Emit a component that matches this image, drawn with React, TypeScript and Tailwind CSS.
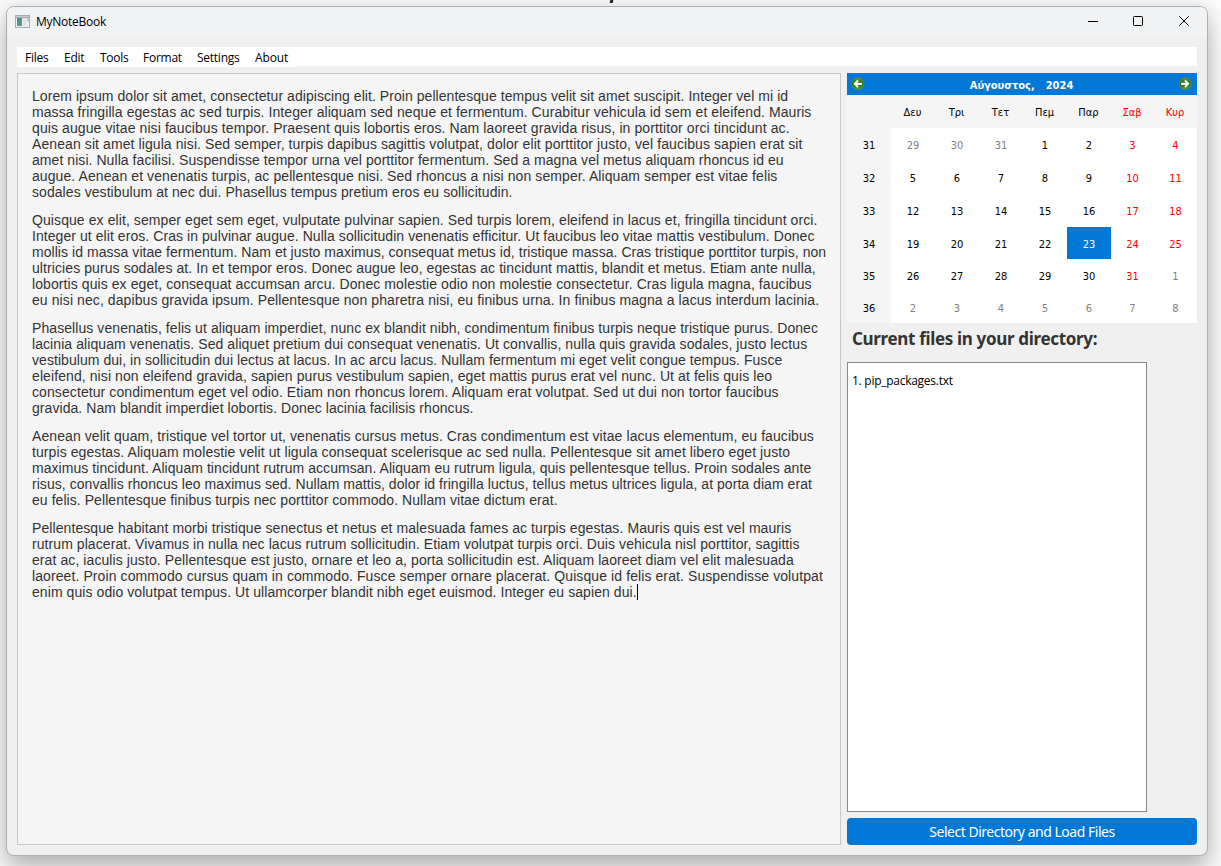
import React from "react";

type Line = [text: string, stretch: number];

// Each line carries the extra width, in pixels, that is spread over its letters.
const paragraphs: Line[][] = [
  [
    ["Lorem ipsum dolor sit amet, consectetur adipiscing elit. Proin pellentesque tempus velit sit amet suscipit. Integer vel mi id", 6.8],
    ["massa fringilla egestas ac sed turpis. Integer aliquam sed neque et fermentum. Curabitur vehicula id sem et eleifend. Mauris", 9.8],
    ["quis augue vitae nisi faucibus tempor. Praesent quis lobortis eros. Nam laoreet gravida risus, in porttitor orci tincidunt ac.", 12.2],
    ["Aenean sit amet ligula nisi. Sed semper, turpis dapibus sagittis volutpat, dolor elit porttitor justo, vel faucibus sapien erat sit", 11.8],
    ["amet nisi. Nulla facilisi. Suspendisse tempor urna vel porttitor fermentum. Sed a magna vel metus aliquam rhoncus id eu", 7],
    ["augue. Aenean et venenatis turpis, ac pellentesque nisi. Sed rhoncus a nisi non semper. Aliquam semper est vitae felis", 10],
    ["sodales vestibulum at nec dui. Phasellus tempus pretium eros eu sollicitudin.", 5],
  ],
  [
    ["Quisque ex elit, semper eget sem eget, vulputate pulvinar sapien. Sed turpis lorem, eleifend in lacus et, fringilla tincidunt orci.", 11.2],
    ["Integer ut elit eros. Cras in pulvinar augue. Nulla sollicitudin venenatis efficitur. Ut faucibus leo vitae mattis vestibulum. Donec", 8.5],
    ["mollis id massa vitae fermentum. Nam et justo maximus, consequat metus id, tristique massa. Cras tristique porttitor turpis, non", 6],
    ["ultricies purus sodales at. In et tempor eros. Donec augue leo, egestas ac tincidunt mattis, blandit et metus. Etiam ante nulla,", 11],
    ["lobortis quis ex eget, consequat accumsan arcu. Donec molestie odio non molestie consectetur. Cras ligula magna, faucibus", 10],
    ["eu nisi nec, dapibus gravida ipsum. Pellentesque non pharetra nisi, eu finibus urna. In finibus magna a lacus interdum lacinia.", 11.2],
  ],
  [
    ["Phasellus venenatis, felis ut aliquam imperdiet, nunc ex blandit nibh, condimentum finibus turpis neque tristique purus. Donec", 9.4],
    ["lacinia aliquam venenatis. Sed aliquet pretium dui consequat venenatis. Ut convallis, nulla quis gravida sodales, justo lectus", 9.5],
    ["vestibulum dui, in sollicitudin dui lectus at lacus. In ac arcu lacus. Nullam fermentum mi eget velit congue tempus. Fusce", 6.4],
    ["eleifend, nisi non eleifend gravida, sapien purus vestibulum sapien, eget mattis purus erat vel nunc. Ut at felis quis leo", 11],
    ["consectetur condimentum eget vel odio. Etiam non rhoncus lorem. Aliquam erat volutpat. Sed ut dui non tortor faucibus", 10.5],
    ["gravida. Nam blandit imperdiet lobortis. Donec lacinia facilisis rhoncus.", 4.2],
  ],
  [
    ["Aenean velit quam, tristique vel tortor ut, venenatis cursus metus. Cras condimentum est vitae lacus elementum, eu faucibus", 10],
    ["turpis egestas. Aliquam molestie velit ut ligula consequat scelerisque ac sed nulla. Pellentesque sit amet libero eget justo", 10.2],
    ["maximus tincidunt. Aliquam tincidunt rutrum accumsan. Aliquam eu rutrum ligula, quis pellentesque tellus. Proin sodales ante", 6.5],
    ["risus, convallis rhoncus leo maximus sed. Nullam mattis, dolor id fringilla luctus, tellus metus ultrices ligula, at porta diam erat", 6.5],
    ["eu felis. Pellentesque finibus turpis nec porttitor commodo. Nullam vitae dictum erat.", 5],
  ],
  [
    ["Pellentesque habitant morbi tristique senectus et netus et malesuada fames ac turpis egestas. Mauris quis est vel mauris", 10],
    ["rutrum placerat. Vivamus in nulla nec lacus rutrum sollicitudin. Etiam volutpat turpis orci. Duis vehicula nisl porttitor, sagittis", 9.2],
    ["erat ac, iaculis justo. Pellentesque est justo, ornare et leo a, porta sollicitudin est. Aliquam laoreet diam vel elit malesuada", 10.8],
    ["laoreet. Proin commodo cursus quam in commodo. Fusce semper ornare placerat. Quisque id felis erat. Suspendisse volutpat", 11.2],
    ["enim quis odio volutpat tempus. Ut ullamcorper blandit nibh eget euismod. Integer eu sapien dui.", 7],
  ],
];

const weekdays = ["Δευ", "Τρι", "Τετ", "Πεμ", "Παρ", "Σαβ", "Κυρ"];

const weeks = [
  { no: 31, days: [29, 30, 31, 1, 2, 3, 4] },
  { no: 32, days: [5, 6, 7, 8, 9, 10, 11] },
  { no: 33, days: [12, 13, 14, 15, 16, 17, 18] },
  { no: 34, days: [19, 20, 21, 22, 23, 24, 25] },
  { no: 35, days: [26, 27, 28, 29, 30, 31, 1] },
  { no: 36, days: [2, 3, 4, 5, 6, 7, 8] },
];

function dayClass(week: number, index: number, day: number): string {
  const outside = (week === 0 && day > 20) || (week >= 4 && day < 20);
  if (outside) return "text-[#808080]";
  if (week === 3 && day === 23) return "bg-[#0078d7] text-white";
  return index >= 5 ? "text-[#ff0000]" : "text-black";
}

function Arrow({ flip = false }: { flip?: boolean }) {
  return (
    <svg width="14" height="14" viewBox="0 0 14 14" className={flip ? "-scale-x-100" : ""}>
      <defs>
        <linearGradient id="green" x1="0" y1="0" x2="0" y2="1">
          <stop offset="0" stopColor="#5c9448" />
          <stop offset="0.5" stopColor="#236b10" />
          <stop offset="1" stopColor="#5aa52c" />
        </linearGradient>
      </defs>
      <circle cx="6.8" cy="6.8" r="6" fill="url(#green)" stroke="#5d8a5c" strokeWidth="0.8" />
      <path d="M2.4 6.8 L6.4 2.8 L7.7 4 L6 5.7 H10.9 V7.9 H6 L7.7 9.6 L6.4 10.8 Z" fill="#fff" />
    </svg>
  );
}

function TitleBar() {
  return (
    <header className="flex h-[30px] shrink-0 items-center bg-[#f0f2f4] pl-2">
      <svg width="15" height="14" viewBox="0 0 15 14" shapeRendering="crispEdges">
        <defs>
          <linearGradient id="app" x1="0" y1="0" x2="1" y2="1">
            <stop offset="0" stopColor="#4f7fa8" />
            <stop offset="1" stopColor="#4fa876" />
          </linearGradient>
        </defs>
        <path d="M0 0H15V13H0Z" fill="#a6abaf" />
        <path d="M1 3H14V12H1Z" fill="#eef0f1" />
        <path d="M1 1H14V2H1Z" fill="#c8cbd0" />
        <path d="M2 3H7V11H2Z" fill="url(#app)" />
        <path d="M8 3H11V11H8Z" fill="#e0e3e3" />
        <path d="M12 3H14V7H12Z" fill="#b5d0c4" />
      </svg>
      <h1 className="ml-[6px] font-['Open_Sans','Noto_Sans',sans-serif] text-[12px] leading-4 tracking-[-0.25px] text-black">MyNoteBook</h1>
      <div className="ml-auto flex h-full items-center">
        <svg width="120" height="30" viewBox="0 0 120 30" fill="none" stroke="#000">
          <path d="M1 14.5H11" />
          <rect x="46.5" y="9.5" width="9" height="9" rx="0.8" />
          <path d="M92.3 9.3L101.7 18.7M101.7 9.3L92.3 18.7" />
        </svg>
      </div>
    </header>
  );
}

function MenuBar() {
  return (
    <nav className="flex h-[19px] shrink-0 bg-white font-['Open_Sans','Noto_Sans',sans-serif] text-[12px] leading-[22px] tracking-[-0.25px] text-black">
      <div className="flex h-5 w-[279px] bg-white pl-2">
        <span className="w-[39px]">Files</span>
        <span className="w-9">Edit</span>
        <span className="w-[43px]">Tools</span>
        <span className="w-[54px]">Format</span>
        <span className="w-[58px]">Settings</span>
        <span className="tracking-[-0.1px]">About</span>
      </div>
    </nav>
  );
}

function Editor() {
  return (
    <main className="flex h-[772px] w-[824px] flex-col gap-3 border border-[#c8c8c8] bg-[#f5f5f5] px-[14px] pt-[14px] font-['Liberation_Sans',Arial,sans-serif] text-[14px] leading-4 text-[#333]">
      {paragraphs.map((lines, p) => (
        <div key={p}>
          {lines.map(([text, stretch], i) => (
            <div key={i} className="flex h-4 whitespace-nowrap">
              <span style={{ letterSpacing: `${stretch / text.length}px` }}>{text}</span>
              {p === 4 && i === 4 && <span className="h-4 w-px bg-black" />}
            </div>
          ))}
        </div>
      ))}
    </main>
  );
}

function Calendar() {
  return (
    <section className="w-[350px] bg-white font-['DejaVu_Sans_Condensed','DejaVu_Sans',sans-serif] text-[11px] leading-4">
      <div className="flex h-[22px] items-start justify-between bg-[#0078d7] pl-1 pr-[5px] pt-1">
        <Arrow />
        <div className="flex gap-[11px] pt-px text-[11px] font-bold text-white">
          <span>Αύγουστος,</span>
          <span>2024</span>
        </div>
        <Arrow flip />
      </div>
      <div className="grid grid-cols-[44px_44px_44px_44px_44px_44px_43px_43px] grid-rows-[33px_33px_33px_33px_32px_32px_32px] text-center">
        <div className="bg-[#f5f5f5]" />
        {weekdays.map((d, i) => (
          <div key={d} className={`flex items-center justify-center bg-[#f5f5f5] pr-px pt-[2px] ${i > 4 ? "text-[#ff0000]" : "text-black"}`}>{d}</div>
        ))}
        {weeks.map((w, r) => (
          <React.Fragment key={w.no}>
            <div className={`flex items-center justify-center bg-[#f5f5f5] text-black ${r > 2 ? "pt-[4px]" : "pt-[2px]"}`}>{w.no}</div>
            {w.days.map((d, i) => (
              <div key={i} className={`flex items-center justify-center ${r > 2 ? "pt-[4px]" : "pt-[2px]"} ${dayClass(r, i, d)}`}>{d}</div>
            ))}
          </React.Fragment>
        ))}
      </div>
    </section>
  );
}

export default function App() {
  return (
    <div className="h-[866px] w-[1221px] overflow-hidden bg-[#fafafa] pl-[6px]">
      <div className="flex h-[6px] pl-[604px]">
        <span className="relative z-10 h-[3px] w-[3px] -skew-x-12 bg-[#222]" />
      </div>
      <div className="flex h-[850px] w-[1202px] flex-col overflow-hidden rounded-lg border border-[#adb0b2] bg-[#f0f0f0] shadow-[0_16px_24px_rgba(0,0,0,0.22),0_0_16px_rgba(0,0,0,0.12)]">
        <TitleBar />
        <div className="flex flex-1 flex-col gap-[7px] px-[10px] pt-[10px]">
          <MenuBar />
          <div className="flex gap-[6px]">
            <Editor />
            <aside className="flex w-[350px] flex-col">
              <Calendar />
              <h2 className="h-[39px] pl-[5px] pt-1 font-['Noto_Sans',sans-serif] text-[17px] font-bold leading-6 tracking-[-0.33px] text-[#333]">
                Current files in your directory:
              </h2>
              <div className="h-[450px] w-[300px] border border-[#828790] bg-white pl-1 pt-[10px] font-['Open_Sans','Noto_Sans',sans-serif] text-[12px] leading-4 tracking-[-0.27px] text-black">
                1. pip_packages.txt
              </div>
              <button className="mt-[6px] h-[27px] w-[350px] rounded bg-[#0078d7] font-['Noto_Sans',sans-serif] text-[14px] leading-[27px] tracking-[-0.48px] text-white">
                Select Directory and Load Files
              </button>
            </aside>
          </div>
        </div>
      </div>
    </div>
  );
}
